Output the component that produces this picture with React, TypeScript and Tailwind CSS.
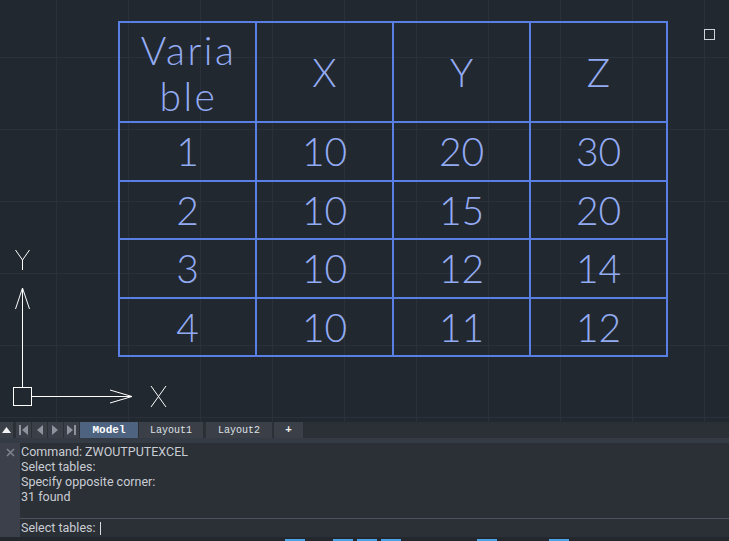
const header = ['Varia ble', 'X', 'Y', 'Z'];
const rows = [
  ['1', '10', '20', '30'],
  ['2', '10', '15', '20'],
  ['3', '10', '12', '14'],
  ['4', '10', '11', '12'],
];
const rowHeights = ['h-[59px]', 'h-[58px]', 'h-[59px]', 'h-[58px]'];

const log = ['Command: ZWOUTPUTEXCEL', 'Select tables:', 'Specify opposite corner:', '31 found'];

// blue status-bar toggles peeking in at the bottom edge
const statusBits = [285, 333, 357, 381, 477, 549];

function TriIcon({ dir, bar }: { dir: 'left' | 'right'; bar?: boolean }) {
  return (
    <svg width="9" height="10" viewBox="0 0 9 10" className="text-[#8d939c]">
      {dir === 'left' ? (
        <>
          {bar && <rect x="0" y="0" width="2" height="10" fill="currentColor" />}
          <path d={bar ? 'M9 0 L3 5 L9 10 Z' : 'M8 0 L2 5 L8 10 Z'} fill="currentColor" />
        </>
      ) : (
        <>
          <path d={bar ? 'M0 0 L6 5 L0 10 Z' : 'M1 0 L7 5 L1 10 Z'} fill="currentColor" />
          {bar && <rect x="7" y="0" width="2" height="10" fill="currentColor" />}
        </>
      )}
    </svg>
  );
}

function Canvas() {
  return (
    <div className="relative h-[422px] bg-[#212830] bg-[linear-gradient(to_right,#2a313b_1px,transparent_1px),linear-gradient(to_bottom,#2a313b_1px,transparent_1px)] bg-[size:72px_72px] bg-[position:56px_57px]">
      {/* drawing: the table */}
      <div
        className="absolute left-[118px] top-[21px] border-l-2 border-t-2 border-[#5a7fe4] text-[#93abf3] font-light"
        style={{ fontFamily: 'Lato, "DejaVu Sans", sans-serif' }}
      >
        <div className="flex h-[100px]">
          {header.map((h, i) => (
            <div
              key={i}
              className="w-[137px] border-r-2 border-b-2 border-[#5a7fe4] flex items-center justify-center text-center text-[39px] leading-[46px]"
            >
              {i === 0 ? (
                <span className="pt-[2px] pl-[2px] tracking-[2.5px]">
                  Varia
                  <br />
                  ble
                </span>
              ) : (
                h
              )}
            </div>
          ))}
        </div>
        {rows.map((r, ri) => (
          <div key={ri} className={`flex ${rowHeights[ri]}`}>
            {r.map((c, ci) => (
              <div
                key={ci}
                className="w-[137px] border-r-2 border-b-2 border-[#5a7fe4] flex items-center justify-center text-[39px] leading-none"
              >
                {c}
              </div>
            ))}
          </div>
        ))}
      </div>

      {/* UCS icon */}
      <svg className="absolute left-0 top-[245px]" width="180" height="170" viewBox="0 0 180 170" fill="none" stroke="#ffffff" strokeWidth="1">
        <path d="M15.5 5 L22.5 15 L29.5 5 M22.5 15 L22.5 25" />
        <path d="M22.5 43 L22.5 142 M22.5 43 L15.5 64 M22.5 43 L29.5 64" />
        <rect x="13.5" y="142.5" width="18" height="18" />
        <path d="M31.5 151.5 L132 151.5 M132 151.5 L110 145 M132 151.5 L110 158 M116 151.5 L110 151.5" />
        <path d="M151 141 L166 162 M166 141 L151 162" />
      </svg>

      {/* pick box */}
      <div className="absolute left-[704px] top-[29px] w-[11px] h-[11px] border border-[#cfd2d6]" />
    </div>
  );
}

function TabBar() {
  return (
    <div className="flex h-[16px] items-stretch gap-[1px] bg-[#2b2f36]" style={{ fontFamily: '"Liberation Mono", monospace' }}>
      <div className="w-[13px] bg-[#3b3f48] flex items-center justify-center">
        <svg width="9" height="6" viewBox="0 0 9 6">
          <path d="M0 6 L4.5 0 L9 6 Z" fill="#f2f2f2" />
        </svg>
      </div>
      <div className="w-[1px]" />
      <div className="w-[15px] bg-[#3b3f48] flex items-center justify-center"><TriIcon dir="left" bar /></div>
      <div className="w-[15px] bg-[#3b3f48] flex items-center justify-center"><TriIcon dir="left" /></div>
      <div className="w-[15px] bg-[#3b3f48] flex items-center justify-center"><TriIcon dir="right" /></div>
      <div className="w-[15px] bg-[#3b3f48] flex items-center justify-center"><TriIcon dir="right" bar /></div>
      <div className="w-[58px] bg-[#4d6380] text-white font-bold text-[11px] flex items-center justify-center">Model</div>
      <div className="w-[64px] bg-[#3b3f48] text-[#dfe2e6] text-[10px] flex items-center justify-center">Layout1</div>
      <div className="w-[66px] ml-[2px] bg-[#3b3f48] text-[#dfe2e6] text-[10px] flex items-center justify-center">Layout2</div>
      <div className="w-[29px] ml-[1px] bg-[#3b3f48] text-[#f0f0f0] text-[11px] font-bold flex items-center justify-center">+</div>
    </div>
  );
}

function CommandPanel() {
  return (
    <div className="flex flex-col bg-[#2b2f36]" style={{ fontFamily: 'Roboto, "Liberation Sans", sans-serif' }}>
      <div className="h-[5px] bg-[#353b45]" />
      <div className="flex h-[94px]">
        <div className="w-[20px] bg-[#3b404a] flex justify-center pt-[5px]">
          <svg width="9" height="9" viewBox="0 0 9 9" stroke="#7d838d" strokeWidth="1.6">
            <path d="M1 1 L8 8 M8 1 L1 8" />
          </svg>
        </div>
        <div className="flex-1 flex flex-col">
          <div className="h-[75px] pl-[1px] pt-[1px] text-[12.5px] leading-[15px] text-[#c9cdd3]">
            {log.map((l) => (
              <div key={l}>{l}</div>
            ))}
          </div>
          <div className="border-t border-[#4b5361] h-[19px] flex items-center pl-[1px] text-[12.5px] text-[#c9cdd3]">
            Select tables:
            <span className="ml-[4px] w-[1px] h-[13px] bg-[#d8dbe0]" />
          </div>
        </div>
      </div>
      <div className="relative h-[4px] bg-[#24282e]">
        {statusBits.map((x) => (
          <div key={x} className="absolute bottom-0 h-[2px] w-[20px] bg-[#4aa3e6]" style={{ left: x }} />
        ))}
      </div>
    </div>
  );
}

export default function App() {
  return (
    <div className="w-[729px] h-[541px] overflow-hidden bg-[#212830] flex flex-col">
      <Canvas />
      <TabBar />
      <CommandPanel />
    </div>
  );
}
